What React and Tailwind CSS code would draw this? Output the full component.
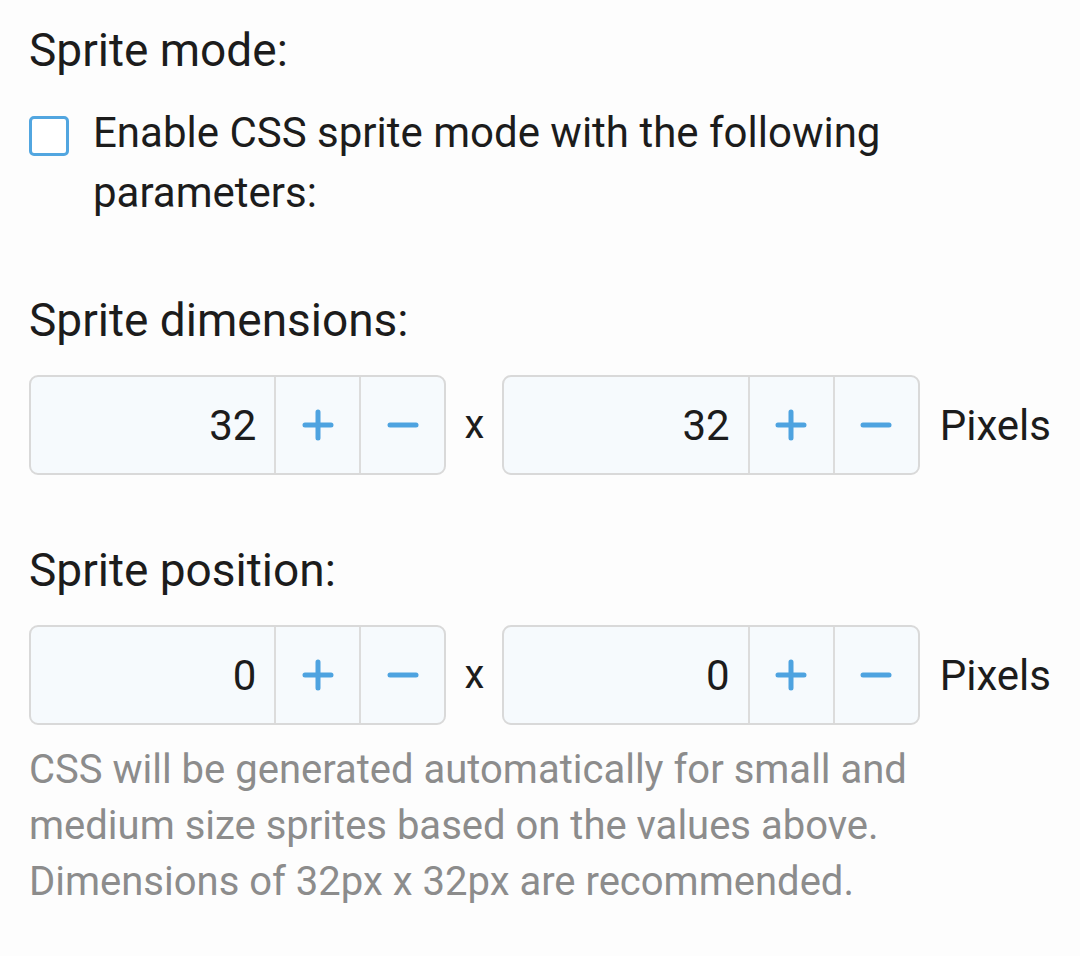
const Stepper = ({ value }) => (
  <div className="flex h-[100px] w-[419px] overflow-hidden rounded-[9px] border-2 border-[#d9d9d9] bg-[#f6fafd]">
    <div className="flex flex-1 items-center justify-end pr-[18px] text-[42px] text-[#1c1c1c]">{value}</div>
    <button className="flex w-[85px] items-center justify-center border-l-2 border-[#dcdcdc]">
      <svg width="34" height="34" viewBox="0 0 34 34">
        <path d="M17 4v26M4 17h26" stroke="#4ea3e0" strokeWidth="5" strokeLinecap="round" />
      </svg>
    </button>
    <button className="flex w-[85px] items-center justify-center border-l-2 border-[#dcdcdc]">
      <svg width="34" height="34" viewBox="0 0 34 34">
        <path d="M4 17h26" stroke="#4ea3e0" strokeWidth="5" strokeLinecap="round" />
      </svg>
    </button>
  </div>
);

const StepperRow = ({ a, b }) => (
  <div className="flex items-center">
    <Stepper value={a} />
    <span className="w-[56px] text-center text-[40px] text-[#1c1c1c]">x</span>
    <Stepper value={b} />
    <span className="ml-[20px] text-[42px] text-[#1c1c1c]">Pixels</span>
  </div>
);

export default function App() {
  return (
    <div className="min-h-[956px] w-[1080px] bg-[#fdfdfd] px-[29px] pt-[20px] font-['Roboto',sans-serif] text-[#1c1c1c]">
      <h2 className="text-[46px] leading-[60px]">Sprite mode:</h2>

      <label className="mt-[23px] flex items-start">
        <span className="mt-[13px] h-[40px] w-[40px] shrink-0 rounded-[5px] border-[3px] border-[#52a6e0] bg-white" />
        <span className="ml-[24px] w-[820px] text-[42px] leading-[60px]">
          Enable CSS sprite mode with the following parameters:
        </span>
      </label>

      <h2 className="mt-[67px] text-[46px] leading-[60px]">Sprite dimensions:</h2>
      <div className="mt-[25px]">
        <StepperRow a="32" b="32" />
      </div>

      <h2 className="mt-[65px] text-[46px] leading-[60px]">Sprite position:</h2>
      <div className="mt-[25px]">
        <StepperRow a="0" b="0" />
      </div>

      <p className="mt-[17px] w-[920px] text-[40px] leading-[56px] text-[#8c8c8c]">
        CSS will be generated automatically for small and medium size sprites based on the values above. Dimensions of
        32px x 32px are recommended.
      </p>
    </div>
  );
}
